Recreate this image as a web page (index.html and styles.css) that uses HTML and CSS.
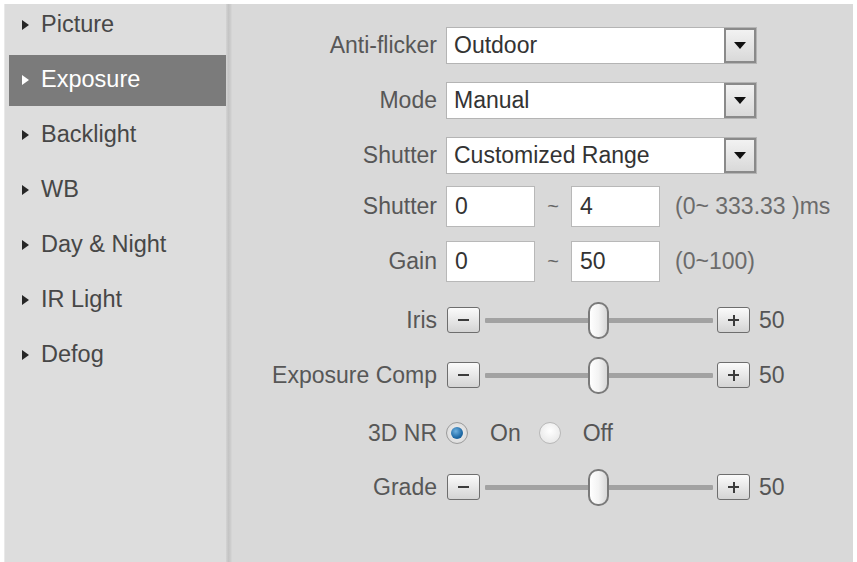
FILE: index.html
```html
<!DOCTYPE html>
<html>
<head>
<meta charset="utf-8">
<link rel="stylesheet" href="styles.css">
</head>
<body>
<div class="frame">
  <aside class="sidebar">
    <ul class="menu">
      <li class="item"><span class="tri"></span>Picture</li>
      <li class="item active"><span class="tri"></span>Exposure</li>
      <li class="item"><span class="tri"></span>Backlight</li>
      <li class="item"><span class="tri"></span>WB</li>
      <li class="item"><span class="tri"></span>Day &amp; Night</li>
      <li class="item"><span class="tri"></span>IR Light</li>
      <li class="item"><span class="tri"></span>Defog</li>
    </ul>
  </aside>
  <div class="divider"></div>
  <main class="content">
    <div class="row r-select r-first">
      <label class="lbl">Anti-flicker</label>
      <div class="select"><span class="sel-text">Outdoor</span><span class="sel-btn"><span class="arrow"></span></span></div>
    </div>
    <div class="row r-select">
      <label class="lbl">Mode</label>
      <div class="select"><span class="sel-text">Manual</span><span class="sel-btn"><span class="arrow"></span></span></div>
    </div>
    <div class="row r-select">
      <label class="lbl">Shutter</label>
      <div class="select"><span class="sel-text">Customized Range</span><span class="sel-btn"><span class="arrow"></span></span></div>
    </div>
    <div class="row r-input r-shutter">
      <label class="lbl">Shutter</label>
      <div class="input">0</div>
      <span class="tilde">~</span>
      <div class="input">4</div>
      <span class="hint">(0~ 333.33 )ms</span>
    </div>
    <div class="row r-input r-gain">
      <label class="lbl">Gain</label>
      <div class="input">0</div>
      <span class="tilde">~</span>
      <div class="input">50</div>
      <span class="hint">(0~100)</span>
    </div>
    <div class="row r-slider r-iris">
      <label class="lbl">Iris</label>
      <span class="sbtn"><span class="minus"></span></span>
      <div class="track"><span class="thumb" style="left:50%"></span></div>
      <span class="sbtn"><span class="plus"></span></span>
      <span class="val">50</span>
    </div>
    <div class="row r-slider r-comp">
      <label class="lbl">Exposure Comp</label>
      <span class="sbtn"><span class="minus"></span></span>
      <div class="track"><span class="thumb" style="left:50%"></span></div>
      <span class="sbtn"><span class="plus"></span></span>
      <span class="val">50</span>
    </div>
    <div class="row r-radio">
      <label class="lbl">3D NR</label>
      <span class="radio on"></span>
      <span class="rtext">On</span>
      <span class="radio off"></span>
      <span class="rtext">Off</span>
    </div>
    <div class="row r-slider r-grade">
      <label class="lbl">Grade</label>
      <span class="sbtn"><span class="minus"></span></span>
      <div class="track"><span class="thumb" style="left:50%"></span></div>
      <span class="sbtn"><span class="plus"></span></span>
      <span class="val">50</span>
    </div>
  </main>
</div>
</body>
</html>
```
FILE: styles.css
```css
html, body {
  margin: 0;
  padding: 0;
  background: #ffffff;
}
body {
  width: 857px;
  height: 562px;
  overflow: hidden;
  font-family: "Liberation Sans", Arial, sans-serif;
  font-size: 23px;
}
.frame {
  display: flex;
  height: 558px;
  margin: 4px 4px 0 4px;
  background: #d9d9d9;
}
.sidebar {
  width: 222px;
  background: #dddddd;
  border-left: 1px solid #e9e9e9;
  box-sizing: border-box;
}
.menu {
  list-style: none;
  margin: -4px 0 0 0;
  padding: 0 0 0 4px;
  display: flex;
  flex-direction: column;
  gap: 4px;
}
.item {
  height: 51px;
  display: flex;
  align-items: center;
  color: #474747;
  font-size: 23.5px;
  padding-left: 13px;
  padding-bottom: 2px;
  box-sizing: border-box;
}
.tri {
  width: 0;
  height: 0;
  border-top: 5.5px solid transparent;
  border-bottom: 5.5px solid transparent;
  border-left: 7px solid #262626;
  margin-right: 12px;
}
.item.active {
  background: #7b7b7b;
  color: #ffffff;
}
.item.active .tri {
  border-left-color: #ffffff;
}
.divider {
  width: 6px;
  background: linear-gradient(to right, #d4d4d4, #c4c4c4 40%, #cbcbcb 70%, #d7d7d7);
}
.content {
  flex: 1;
  padding-top: 23px;
  color: #555555;
}
.row {
  display: flex;
  align-items: center;
}
.lbl {
  width: 205px;
  text-align: right;
  margin-right: 9px;
  color: #575757;
  flex: none;
}
.r-select { height: 37px; margin-top: 18px; }
.r-first { margin-top: 0; }
.r-input { height: 41px; }
.r-shutter { margin-top: 12px; }
.r-gain { margin-top: 14px; }
.r-slider { height: 36px; }
.r-iris { margin-top: 20px; }
.r-comp { margin-top: 19px; }
.r-radio { height: 24px; margin-top: 28px; }
.r-grade { margin-top: 24px; }

.select {
  width: 311px;
  height: 37px;
  display: flex;
  background: #ffffff;
  border: 1px solid #b4b4b4;
  box-sizing: border-box;
}
.sel-text {
  flex: 1;
  padding-left: 7px;
  line-height: 35px;
  color: #333333;
}
.sel-btn {
  width: 32px;
  height: 35px;
  box-sizing: border-box;
  border: 2px solid #8a8a8a;
  background: linear-gradient(#f2f2f2, #d9d9d9);
  display: flex;
  align-items: center;
  justify-content: center;
}
.arrow {
  width: 0;
  height: 0;
  border-left: 6px solid transparent;
  border-right: 6px solid transparent;
  border-top: 7px solid #111111;
}
.input {
  width: 89px;
  height: 41px;
  box-sizing: border-box;
  background: #ffffff;
  border: 1px solid #b8b8b8;
  padding-left: 8px;
  line-height: 38px;
  color: #333333;
}
.tilde {
  width: 36px;
  text-align: center;
  color: #666666;
  font-size: 20px;
}
.hint {
  margin-left: 15px;
  color: #6b6b6b;
}
.sbtn {
  width: 33px;
  height: 26px;
  box-sizing: border-box;
  border: 1px solid #6e6e6e;
  border-radius: 3px;
  background: linear-gradient(#fbfbfb, #d4d4d4);
  position: relative;
  flex: none;
  margin-left: 1px;
}
.minus, .plus {
  position: absolute;
  left: 10px;
  top: 11px;
  width: 11px;
  height: 2px;
  background: #3c3c3c;
}
.plus::after {
  content: "";
  position: absolute;
  left: 4.5px;
  top: -4.5px;
  width: 2px;
  height: 11px;
  background: #3c3c3c;
}
.track {
  width: 228px;
  height: 5px;
  background: #a2a2a2;
  margin: 0 3px 0 5px;
  position: relative;
  border-radius: 1px;
}
.thumb {
  position: absolute;
  top: -16px;
  margin-left: -11px;
  width: 21px;
  height: 37px;
  box-sizing: border-box;
  border: 2px solid #7a7a7a;
  border-radius: 10px;
  background: linear-gradient(to right, #ffffff, #f3f3f3 50%, #d8d8d8);
}
.val {
  margin-left: 9px;
  color: #555555;
}
.radio {
  width: 22px;
  height: 22px;
  box-sizing: border-box;
  border-radius: 50%;
  flex: none;
  position: relative;
}
.radio.on {
  border: 1px solid #9c9c9c;
  background: radial-gradient(circle at 50% 50%, #f4f4f4, #d4d4d4);
}
.radio.on::after {
  content: "";
  position: absolute;
  left: 4px;
  top: 4px;
  width: 12px;
  height: 12px;
  border-radius: 50%;
  background: radial-gradient(circle at 40% 35%, #6fb1e0, #1f6aa6 60%, #17507f);
}
.radio.off {
  border: 1px solid #b8b8b8;
  background: radial-gradient(circle at 50% 40%, #ffffff, #e2e2e2);
  margin-left: 18px;
}
.rtext {
  margin-left: 22px;
  color: #555555;
}
```
